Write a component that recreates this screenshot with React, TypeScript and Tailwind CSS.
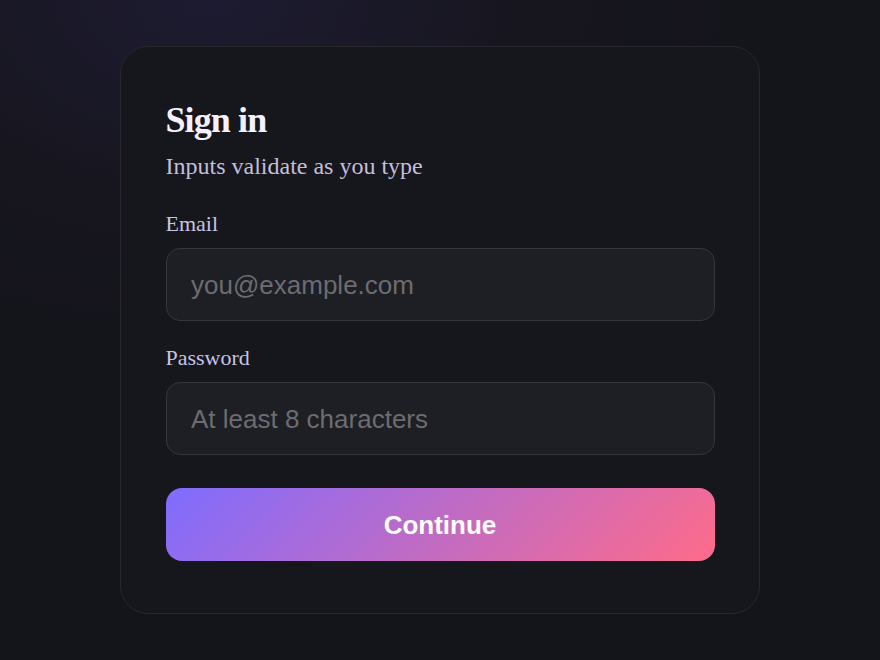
export default function App() {
  return (
    <div className="flex min-h-[660px] w-full items-center justify-center bg-[radial-gradient(ellipse_65%_55%_at_24%_0%,#1d1b31_0%,#17161f_55%,#14141b_100%)] bg-[#14141b]">
      <div className="w-[640px] rounded-[28px] border-[1.5px] border-[#27272d] bg-[#16161d] px-[44.5px] pb-[52.5px] pt-[52.5px] font-['Liberation_Serif',serif]">
        <h1 className="text-[36px] font-bold leading-[40px] tracking-[-0.025em] text-[#f4f1ff]">
          Sign in
        </h1>
        <p className="mt-[10px] text-[24px] leading-[32px] text-[#c3bfdb]">
          Inputs validate as you type
        </p>

        <form className="mt-[28px] flex flex-col" onSubmit={(e) => e.preventDefault()}>
          <label className="flex flex-col">
            <span className="text-[22px] leading-[28px] text-[#c8c4e2]">Email</span>
            <input
              type="email"
              placeholder="you@example.com"
              className="mt-[10px] h-[73px] w-full rounded-[14px] border-[1.5px] border-[#35363b] bg-[#1e1f24] px-[24.5px] pt-[3px] font-['Liberation_Sans',Arial,sans-serif] text-[26px] text-[#e8e8ec] outline-none placeholder:text-[#6c6c71]"
            />
          </label>

          <label className="mt-[23px] flex flex-col">
            <span className="text-[22px] leading-[28px] text-[#c8c4e2]">Password</span>
            <input
              type="password"
              placeholder="At least 8 characters"
              className="mt-[10px] h-[73px] w-full rounded-[14px] border-[1.5px] border-[#35363b] bg-[#1e1f24] px-[24.5px] pt-[3px] font-['Liberation_Sans',Arial,sans-serif] text-[26px] text-[#e8e8ec] outline-none placeholder:text-[#6c6c71]"
            />
          </label>

          <button
            type="submit"
            className="mt-[33px] h-[73px] w-full rounded-[16px] bg-[linear-gradient(135deg,#7f6cff,#ff6b8a)] pt-[2px] font-['Liberation_Sans',Arial,sans-serif] text-[26px] font-bold text-white"
          >
            Continue
          </button>
        </form>
      </div>
    </div>
  );
}
